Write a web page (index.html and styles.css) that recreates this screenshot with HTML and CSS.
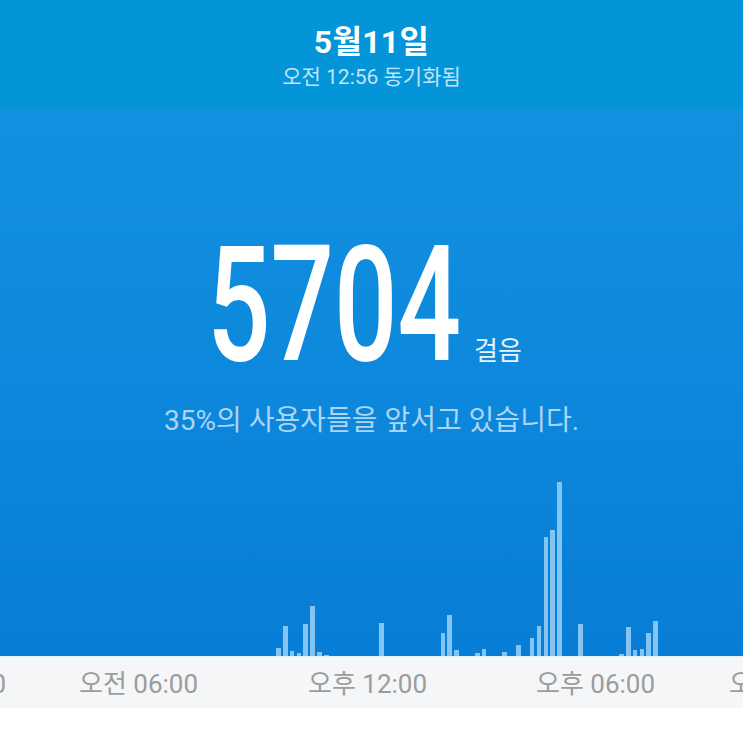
FILE: index.html
```html
<!DOCTYPE html>
<html lang="ko">
<head>
<meta charset="utf-8">
<title>걸음</title>
<link rel="stylesheet" href="styles.css">
</head>
<body>
<div class="screen">
  <header class="header">
    <div class="date">5월11일</div>
    <div class="sync">오전 12:56 동기화됨</div>
  </header>
  <main class="main">
    <div class="hero">
      <div class="count"><span class="count-num">5704</span></div>
      <div class="unit">걸음</div>
    </div>
    <div class="rank">35%의 사용자들을 앞서고 있습니다.</div>
    <div class="chart">
      <div class="bars">
        <span class="bar" style="height:8px"></span>
        <span class="bar" style="height:30px"></span>
        <span class="bar" style="height:5px"></span>
        <span class="bar" style="height:3.5px"></span>
        <span class="bar" style="height:32px"></span>
        <span class="bar" style="height:50px"></span>
        <span class="bar" style="height:4px"></span>
        <span class="bar" style="height:1px"></span>
        <span class="bar" style="height:0"></span>
        <span class="bar" style="height:0"></span>
        <span class="bar" style="height:0"></span>
        <span class="bar" style="height:0"></span>
        <span class="bar" style="height:0"></span>
        <span class="bar" style="height:0"></span>
        <span class="bar" style="height:0"></span>
        <span class="bar" style="height:33px"></span>
        <span class="bar" style="height:0"></span>
        <span class="bar" style="height:0"></span>
        <span class="bar" style="height:0"></span>
        <span class="bar" style="height:0"></span>
        <span class="bar" style="height:0"></span>
        <span class="bar" style="height:0"></span>
        <span class="bar" style="height:0"></span>
        <span class="bar" style="height:0"></span>
        <span class="bar" style="height:23px"></span>
        <span class="bar" style="height:41px"></span>
        <span class="bar" style="height:6px"></span>
        <span class="bar" style="height:0"></span>
        <span class="bar" style="height:0"></span>
        <span class="bar" style="height:3.5px"></span>
        <span class="bar" style="height:7px"></span>
        <span class="bar" style="height:0"></span>
        <span class="bar" style="height:0"></span>
        <span class="bar" style="height:4px"></span>
        <span class="bar" style="height:0"></span>
        <span class="bar" style="height:11px"></span>
        <span class="bar" style="height:0"></span>
        <span class="bar" style="height:18px"></span>
        <span class="bar" style="height:30px"></span>
        <span class="bar" style="height:119px"></span>
        <span class="bar" style="height:126px"></span>
        <span class="bar" style="height:174px"></span>
        <span class="bar" style="height:0"></span>
        <span class="bar" style="height:0"></span>
        <span class="bar" style="height:32px"></span>
        <span class="bar" style="height:0"></span>
        <span class="bar" style="height:0"></span>
        <span class="bar" style="height:0"></span>
        <span class="bar" style="height:0"></span>
        <span class="bar" style="height:0"></span>
        <span class="bar" style="height:2px"></span>
        <span class="bar" style="height:29px"></span>
        <span class="bar" style="height:6px"></span>
        <span class="bar" style="height:7px"></span>
        <span class="bar" style="height:23px"></span>
        <span class="bar" style="height:35px"></span>
      </div>
    </div>
  </main>
  <div class="axis">
    <span class="tick" style="left:-113px">오전 12:00</span>
    <span class="tick" style="left:79px">오전 06:00</span>
    <span class="tick" style="left:308px">오후 12:00</span>
    <span class="tick" style="left:536px">오후 06:00</span>
    <span class="tick" style="left:729px">오전 12:00</span>
  </div>
  <div class="footer"></div>
</div>
</body>
</html>
```

FILE: styles.css
```css
* { box-sizing: border-box; }

html, body {
  margin: 0;
  padding: 0;
  background: #ffffff;
}

body {
  font-family: Roboto, "Noto Sans CJK KR", "Noto Sans", sans-serif;
}

.screen {
  width: 743px;
  height: 743px;
  overflow: hidden;
  display: flex;
  flex-direction: column;
}

.header {
  height: 109px;
  background: #0495d9;
  display: flex;
  flex-direction: column;
  align-items: center;
  padding-top: 23px;
  flex-shrink: 0;
}

.date {
  color: #ffffff;
  font-size: 32px;
  font-weight: 700;
  line-height: 38px;
  letter-spacing: 0.3px;
}

.sync {
  margin-top: 4px;
  color: #c2e2f6;
  font-size: 21px;
  line-height: 25px;
}

.main {
  height: 547px;
  flex-shrink: 0;
  background: linear-gradient(to bottom, #1291e0 0%, #0d88dc 50%, #087dd5 100%);
  display: flex;
  flex-direction: column;
  align-items: stretch;
}

.hero {
  margin-top: 115px;
  display: flex;
  justify-content: center;
  align-items: baseline;
  padding-right: 14px;
}

.count {
  width: 252px;
  white-space: nowrap;
  line-height: 162px;
  height: 162px;
}

.count-num {
  display: inline-block;
  color: #ffffff;
  font-family: Roboto, sans-serif;
  font-size: 162px;
  font-weight: 500;
  line-height: 162px;
  transform: scaleX(0.69);
  transform-origin: left center;
}

.unit {
  margin-left: 15px;
  color: #e8f4fd;
  font-size: 26px;
  line-height: 30px;
}

.rank {
  margin-top: 18px;
  text-align: center;
  color: #aad5f4;
  font-size: 28px;
  line-height: 34px;
}

.chart {
  flex: 1;
  display: flex;
  align-items: flex-end;
}

.bars {
  margin-left: 276px;
  display: flex;
  align-items: flex-end;
  gap: 2.175px;
}

.bar {
  display: block;
  width: 4.7px;
  background: #84c4f3;
}

.axis {
  position: relative;
  height: 52px;
  flex-shrink: 0;
  background: #f4f6f8;
  border-top: 1px solid #e3f1fb;
  overflow: hidden;
}

.tick {
  position: absolute;
  top: 7px;
  line-height: 40px;
  font-size: 26px;
  color: #9c9c9c;
  white-space: nowrap;
}

.footer {
  flex: 1;
  background: #ffffff;
}
```
